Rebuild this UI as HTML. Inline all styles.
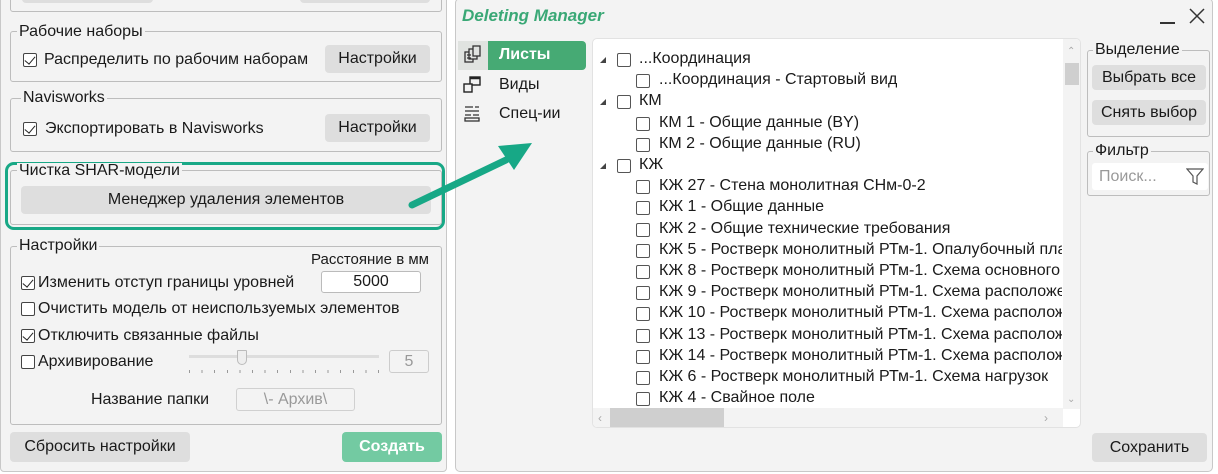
<!DOCTYPE html>
<html><head><meta charset="utf-8"><style>
*{margin:0;padding:0;box-sizing:border-box}
body{width:1218px;height:474px;background:#fff;position:relative;overflow:hidden;font-family:"Segoe UI","Liberation Sans","DejaVu Sans",sans-serif;font-size:16px;color:#1a1a1a}
.a{position:absolute}
.t{position:absolute;white-space:nowrap;line-height:18px}
.gb{position:absolute;border:1px solid #bdbdbd;border-radius:3px}
.lg{position:absolute;background:#f3f3f3;padding:0 2px;line-height:16px;white-space:nowrap}
.btn{position:absolute;background:#dedede;border-radius:4px;text-align:center;white-space:nowrap}
.cb{position:absolute;width:14px;height:14px;border:1px solid #444;border-radius:2px;background:#fff}
.cb.on::after{content:"";position:absolute;left:3px;top:0px;width:5px;height:9px;border:solid #222;border-width:0 1.6px 1.6px 0;transform:rotate(40deg)}
.tri{position:absolute;width:0;height:0;border-left:6px solid transparent;border-bottom:6px solid #444}
</style></head><body>
<div class="a" style="left:0;top:-4px;width:447px;height:476px;background:#f3f3f3;border:1px solid #c8c8c8;border-radius:4px"></div>
<div class="gb" style="left:10px;top:-6px;width:432px;height:18px"></div>
<div class="btn" style="left:22px;top:-6px;width:131px;height:9px"></div>
<div class="btn" style="left:300px;top:-6px;width:130px;height:9px"></div>

<div class="gb" style="left:10px;top:31px;width:432px;height:51px"></div>
<div class="lg" style="left:17px;top:24px">Рабочие наборы</div>
<div class="cb on" style="left:23px;top:53px"></div>
<div class="t" style="left:44px;top:51px">Распределить по рабочим наборам</div>
<div class="btn" style="left:325px;top:45px;width:105px;height:28px;line-height:28px">Настройки</div>

<div class="gb" style="left:10px;top:98px;width:432px;height:54px"></div>
<div class="lg" style="left:21px;top:90px">Navisworks</div>
<div class="cb on" style="left:23px;top:122px"></div>
<div class="t" style="left:45px;top:120px">Экспортировать в Navisworks</div>
<div class="btn" style="left:325px;top:114px;width:105px;height:28px;line-height:28px">Настройки</div>

<div class="a" style="left:5px;top:162px;width:440px;height:68px;border:3px solid #18a886;border-radius:9px"></div>
<div class="gb" style="left:10px;top:170px;width:432px;height:55px"></div>
<div class="lg" style="left:17px;top:163px">Чистка SHAR-модели</div>
<div class="btn" style="left:21px;top:186px;width:410px;height:28px;line-height:28px">Менеджер удаления элементов</div>

<div class="gb" style="left:10px;top:246px;width:432px;height:179px"></div>
<div class="lg" style="left:17px;top:238px">Настройки</div>
<div class="t" style="left:311px;top:251px;font-size:15px">Расстояние в мм</div>
<div class="cb on" style="left:21px;top:276px"></div>
<div class="t" style="left:38px;top:274px">Изменить отступ границы уровней</div>
<div class="a" style="left:321px;top:271px;width:100px;height:22px;background:#fff;border:1px solid #bbb;border-radius:3px;text-align:center;line-height:20px">5000</div>
<div class="cb" style="left:21px;top:302px"></div>
<div class="t" style="left:38px;top:300px">Очистить модель от неиспользуемых элементов</div>
<div class="cb on" style="left:21px;top:329px"></div>
<div class="t" style="left:38px;top:327px">Отключить связанные файлы</div>
<div class="cb" style="left:21px;top:355px"></div>
<div class="t" style="left:38px;top:353px">Архивирование</div>
<div class="a" style="left:189px;top:355px;width:190px;height:3px;background:#ddd"></div>
<div class="a" style="left:237px;top:350px;width:10px;height:15px;background:#eee;border:1px solid #bbb;border-radius:1px 1px 5px 5px"></div>
<div class="a" style="left:189px;top:370px;width:190px;height:3px;background:repeating-linear-gradient(90deg,#999 0 1px,transparent 1px 12.6px)"></div>
<div class="a" style="left:389px;top:350px;width:40px;height:23px;border:1px solid #ccc;border-radius:3px;text-align:center;line-height:21px;color:#999">5</div>
<div class="t" style="left:91px;top:391px">Название папки</div>
<div class="a" style="left:236px;top:388px;width:119px;height:23px;border:1px solid #d0d0d0;border-radius:3px;text-align:center;line-height:21px;color:#999">\- Архив\</div>
<div class="btn" style="left:10px;top:432px;width:180px;height:30px;line-height:30px">Сбросить настройки</div>
<div class="btn" style="left:342px;top:432px;width:100px;height:30px;line-height:30px;background:#73caa2;color:#fff;font-weight:bold">Создать</div>

<div class="a" style="left:455px;top:-2px;width:758px;height:474px;background:#f3f3f3;border:1px solid #c8c8c8;border-radius:5px"></div>
<div class="t" style="left:462px;top:6px;font-size:17px;font-weight:bold;font-style:italic;color:#3aa876;line-height:20px">Deleting Manager</div>
<div class="a" style="left:1160px;top:22px;width:15px;height:1.5px;background:#333"></div>
<svg class="a" style="left:1189px;top:8px" width="16" height="16"><path d="M1 1L15 15M15 1L1 15" stroke="#333" stroke-width="1.5"/></svg>

<div class="a" style="left:458px;top:41px;width:30px;height:29px;background:#e0e3e0"></div>
<div class="a" style="left:488px;top:41px;width:98px;height:29px;background:#46aa74;border-radius:0 4px 4px 0"></div>
<div class="t" style="left:499px;top:46px;color:#fff;font-weight:bold">Листы</div>
<svg class="a" style="left:463px;top:45px" width="20" height="20" fill="none" stroke="#333" stroke-width="1.3"><rect x="2" y="7" width="8" height="10"/><rect x="6" y="4" width="8" height="10" fill="#e0e3e0"/><rect x="10" y="1" width="7" height="10" fill="#e0e3e0"/><path d="M4 10h4M4 13h4"/></svg>
<div class="t" style="left:499px;top:76px">Виды</div>
<svg class="a" style="left:462px;top:75px" width="20" height="20" fill="none" stroke="#222" stroke-width="1.4"><rect x="8" y="2" width="10" height="8"/><rect x="2" y="9" width="8" height="8" fill="#f3f3f3"/><path d="M8 3h10" stroke-width="2.5"/></svg>
<div class="t" style="left:499px;top:105px">Спец-ии</div>
<svg class="a" style="left:463px;top:105px" width="18" height="18" fill="none" stroke="#333" stroke-width="1.3"><path d="M2 2h8M12 2h4M2 6h14M2 10h6M10 10h6"/><rect x="2" y="13" width="14" height="3"/></svg>

<svg class="a" style="left:400px;top:130px" width="140" height="90"><path d="M12 75L106 30" stroke="#17a886" stroke-width="7" stroke-linecap="round"/><path d="M132 13L98 16L114 40Z" fill="#17a886"/></svg>

<div class="a" style="left:592px;top:38px;width:489px;height:390px;background:#fff;border:1px solid #e2e2e2;border-radius:5px;overflow:hidden">
<div class="a" style="left:470px;top:0;width:18px;height:370px;background:#f3f3f3"></div>
<div class="a" style="left:472px;top:24px;width:14px;height:22px;background:#cfcfcf"></div>
<div class="t" style="left:474px;top:4px;font-size:10px;color:#aaa">⌃</div>
<div class="t" style="left:474px;top:352px;font-size:10px;color:#aaa">⌄</div>
<div class="a" style="left:0;top:369px;width:470px;height:20px;background:#f3f3f3"></div>
<div class="a" style="left:17px;top:369px;width:114px;height:19px;background:#cfcfcf"></div>
<div class="t" style="left:5px;top:370px;color:#aaa;font-size:12px">‹</div>
<div class="t" style="left:451px;top:370px;color:#aaa;font-size:12px">›</div>
</div>
<div id="tree"></div>
<script>
var rows=[[0,"...Координация"],[1,"...Координация - Стартовый вид"],[0,"КМ"],[1,"КМ 1 - Общие данные (BY)"],[1,"КМ 2 - Общие данные (RU)"],[0,"КЖ"],[1,"КЖ 27 - Стена монолитная СНм-0-2"],[1,"КЖ 1 - Общие данные"],[1,"КЖ 2 - Общие технические требования"],[1,"КЖ 5 - Ростверк монолитный РТм-1. Опалубочный пла"],[1,"КЖ 8 - Ростверк монолитный РТм-1. Схема основного"],[1,"КЖ 9 - Ростверк монолитный РТм-1. Схема расположе"],[1,"КЖ 10 - Ростверк монолитный РТм-1. Схема располож"],[1,"КЖ 13 - Ростверк монолитный РТм-1. Схема располож"],[1,"КЖ 14 - Ростверк монолитный РТм-1. Схема располож"],[1,"КЖ 6 - Ростверк монолитный РТм-1. Схема нагрузок"],[1,"КЖ 4 - Свайное поле"]];
var h="";rows.forEach(function(r,i){var y=Math.round(60+i*21.2);var cx=r[0]?636:617;var tx=r[0]?659:639;
if(!r[0])h+='<div class="tri" style="left:600px;top:'+(y-3)+'px"></div>';
h+='<div class="cb" style="left:'+cx+'px;top:'+(y-7)+'px;border-color:#555"></div>';
h+='<div class="t" style="left:'+tx+'px;top:'+(y-10)+'px;max-width:'+(1062-tx)+'px;overflow:hidden">'+r[1]+'</div>';});
document.getElementById("tree").innerHTML=h;
</script>

<div class="gb" style="left:1087px;top:50px;width:123px;height:87px"></div>
<div class="lg" style="left:1093px;top:42px">Выделение</div>
<div class="btn" style="left:1092px;top:65px;width:114px;height:25px;line-height:25px">Выбрать все</div>
<div class="btn" style="left:1092px;top:100px;width:114px;height:25px;line-height:25px">Снять выбор</div>
<div class="gb" style="left:1087px;top:151px;width:123px;height:45px"></div>
<div class="lg" style="left:1093px;top:143px">Фильтр</div>
<div class="a" style="left:1092px;top:163px;width:116px;height:27px;background:#fff;border-radius:3px"></div>
<div class="t" style="left:1099px;top:168px;color:#999">Поиск...</div>
<svg class="a" style="left:1186px;top:168px" width="18" height="17" fill="none" stroke="#555" stroke-width="1.2"><path d="M1 1H17L11 8V16L7 14V8Z"/></svg>
<div class="btn" style="left:1092px;top:433px;width:115px;height:29px;line-height:29px">Сохранить</div>
</body></html>
